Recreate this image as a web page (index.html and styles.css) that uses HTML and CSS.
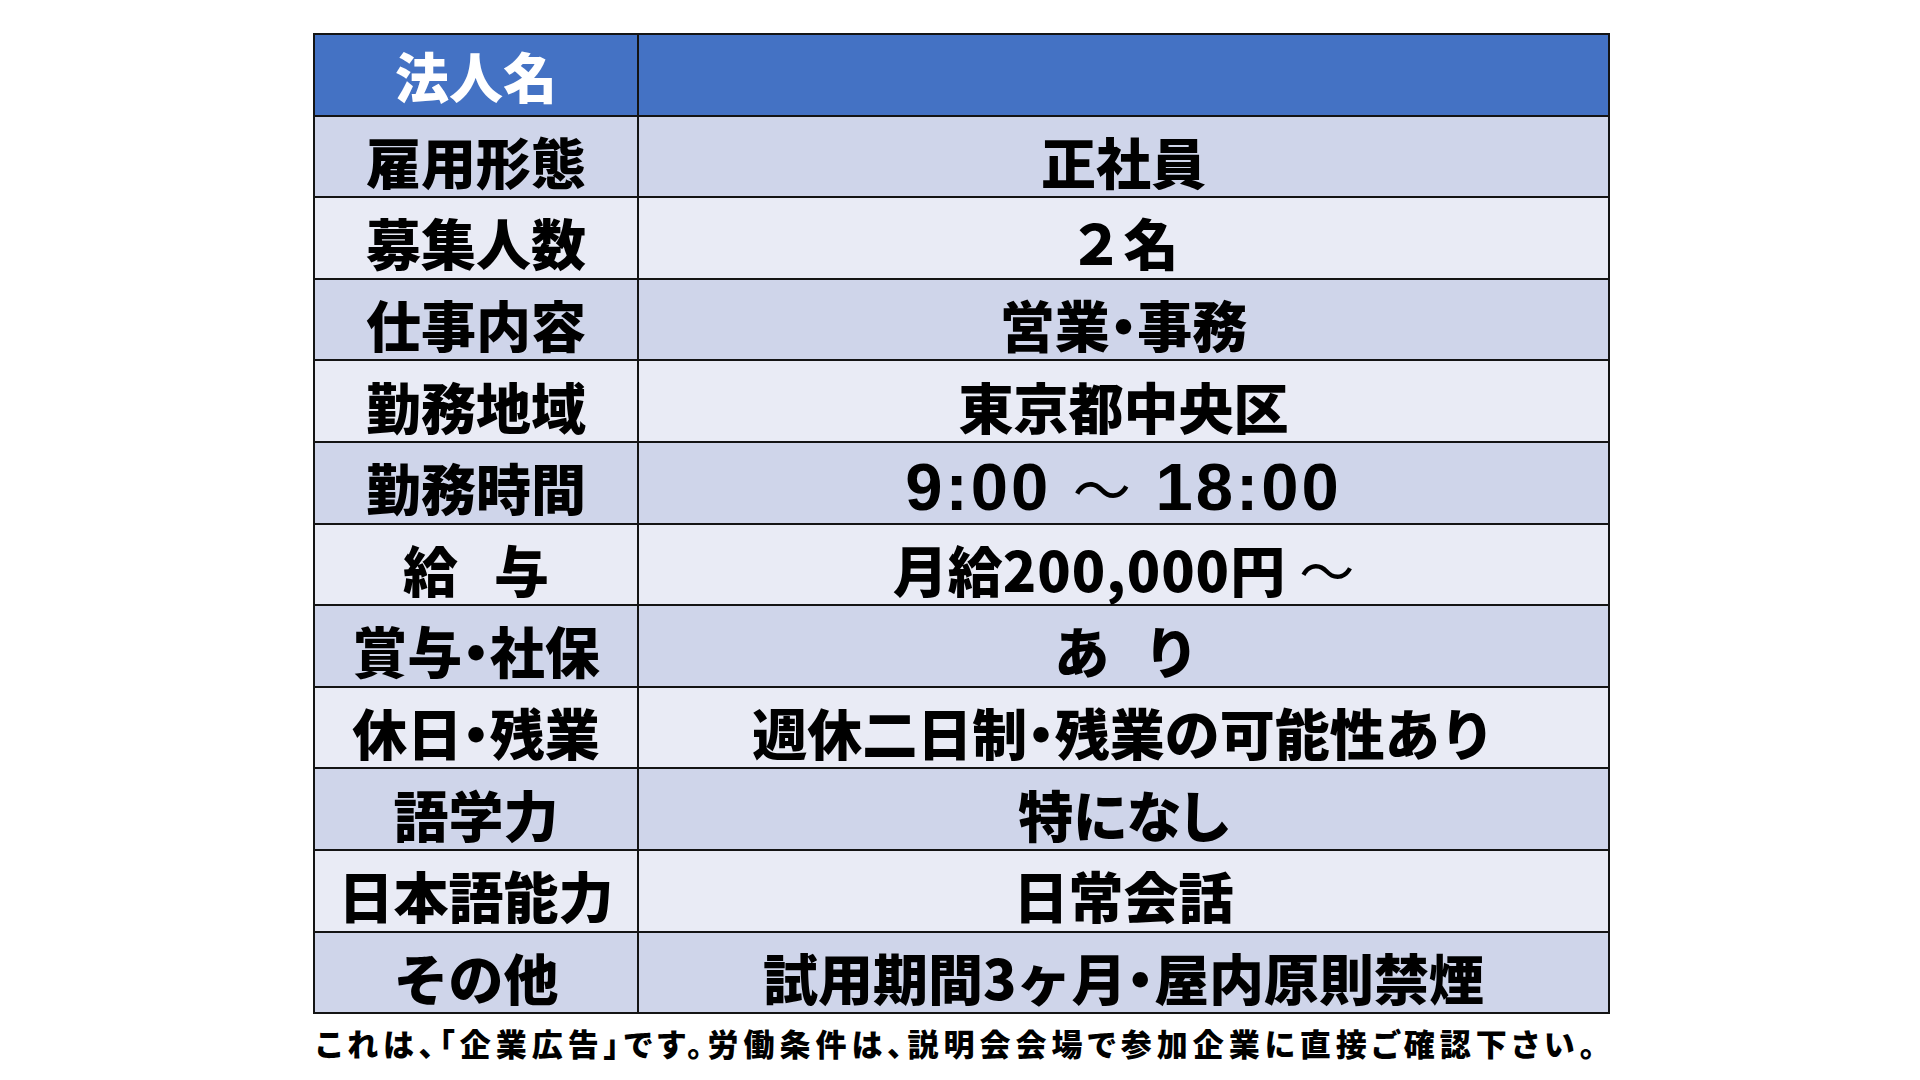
FILE: index.html
```html
<!DOCTYPE html>
<html lang="ja">
<head>
<meta charset="utf-8">
<title>募集要項</title>
<link rel="stylesheet" href="styles.css">
</head>
<body>
<main class="page">
  <div class="job">
    <div class="cell head">法人名</div><div class="cell head"></div>
    <div class="cell odd">雇用形態</div><div class="cell odd">正社員</div>
    <div class="cell even">募集人数</div><div class="cell even">２名</div>
    <div class="cell odd">仕事内容</div><div class="cell odd">営業<span class="dot">・</span>事務</div>
    <div class="cell even">勤務地域</div><div class="cell even">東京都中央区</div>
    <div class="cell odd">勤務時間</div><div class="cell odd time">9:00 <span class="tilde">～</span> 18:00</div>
    <div class="cell even"><span class="kyu">給</span>与</div><div class="cell even">月給<span class="num">200,000</span>円 <span class="tilde2">～</span></div>
    <div class="cell odd">賞与<span class="dot">・</span>社保</div><div class="cell odd kana"><span class="a">あ</span>り</div>
    <div class="cell even">休日<span class="dot">・</span>残業</div><div class="cell even">週休二日制<span class="dot">・</span>残業の可能性あり</div>
    <div class="cell odd">語学力</div><div class="cell odd kana">特になし</div>
    <div class="cell even">日本語能力</div><div class="cell even">日常会話</div>
    <div class="cell odd">その他</div><div class="cell odd">試用期間3ヶ月<span class="dot">・</span>屋内原則禁煙</div>
  </div>
  <p class="note">これは、「企業広告」です。労働条件は、説明会会場で参加企業に直接ご確認下さい。</p>
</main>
</body>
</html>
```
FILE: styles.css
```css
html, body {
  margin: 0;
  padding: 0;
  background: #ffffff;
}
body {
  font-family: "Noto Sans CJK JP", "Noto Sans", sans-serif;
  color: #000;
}
.page {
  width: 1297px;
  margin: 0 0 0 313px;
  padding-top: 33px;
}
.job {
  display: grid;
  grid-template-columns: 322px 969px;
  grid-auto-rows: 79.6px;
  gap: 2px;
  padding: 2px;
  background: #141414;
  width: 1297px;
  box-sizing: border-box;
}
.cell {
  display: flex;
  align-items: center;
  justify-content: center;
  padding-top: 8px;
  box-sizing: border-box;
  font-weight: 900;
  font-size: 55px;
  line-height: 1;
  white-space: nowrap;
}
.head {
  background: #4472c4;
  color: #ffffff;
  font-size: 54px;
  padding-top: 2px;
}
.odd { background: #cfd5ea; }
.even { background: #e9ebf5; }
.dot {
  font-feature-settings: "palt";
}
.kyu {
  margin-right: 36px;
}
.kana {
  font-feature-settings: "palt";
}
.a {
  margin-right: 40px;
}
.time {
  font-family: "Liberation Sans", Arial, sans-serif;
  font-weight: 700;
  font-size: 67px;
  letter-spacing: 3px;
  white-space: pre;
}
.tilde {
  font-family: "Noto Sans CJK JP", sans-serif;
  font-weight: 400;
  font-size: 58px;
}
.num {
  letter-spacing: 1px;
}
.tilde2 {
  font-weight: 400;
  margin-left: 14px;
}
.note {
  margin: 10px 0 0 3px;
  font-size: 31px;
  font-weight: 900;
  line-height: 1.2;
  font-feature-settings: "palt";
  letter-spacing: 5px;
  white-space: nowrap;
}
```
